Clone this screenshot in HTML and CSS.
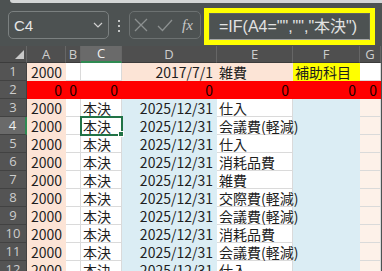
FILE: index.html
```html
<!DOCTYPE html>
<html lang="ja">
<head>
  <meta charset="UTF-8" />
  <meta name="viewport" content="width=device-width, initial-scale=1.0"/>
  <title>Sheet1</title>
  <link rel="stylesheet" href="styles.css">
</head>
<body>
  <div class="ribbon-edge"></div>
  <div class="formula-row">
    <div class="name-box">
      <span>C4</span>
      <svg width="10" height="6" viewBox="0 0 10 6"><polyline points="1,1 5,5 9,1" fill="none" stroke="#d0d0d0" stroke-width="1.2"/></svg>
    </div>
    <div class="grip"><i></i><i></i><i></i></div>
    <div class="fx-box">
      <svg width="14" height="14" viewBox="0 0 14 14"><path d="M1 1L13 13M13 1L1 13" stroke="#8c9090" stroke-width="1.3"/></svg>
      <svg width="16" height="13" viewBox="0 0 16 13"><polyline points="1,7 5.5,11.5 15,1" fill="none" stroke="#8c9090" stroke-width="1.3"/></svg>
      <span class="fx">fx</span>
    </div>
    <div class="formula-mark">
      <div class="formula">=IF(A4="","","本決")</div>
    </div>
  </div>

  <table class="sheet">
    <colgroup>
      <col style="width:27px"><col style="width:39px"><col style="width:15px"><col style="width:41px">
      <col style="width:95px"><col style="width:76px"><col style="width:67px"><col style="width:21px">
    </colgroup>
    <tr class="head">
      <th class="corner"><svg width="9" height="9" viewBox="0 0 9 9"><polygon points="9,0 9,9 0,9" fill="#c8c8c8"/></svg></th>
      <th>A</th><th>B</th><th class="sel">C</th><th>D</th><th>E</th><th>F</th><th>G</th>
    </tr>
    <tr>
      <th>1</th><td class="peach num">2000</td><td></td><td></td><td class="peach num">2017/7/1</td>
      <td class="peach">雑費</td><td class="yellow">補助科目</td><td></td>
    </tr>
    <tr class="red">
      <th>2</th><td class="num">0</td><td class="num">0</td><td class="num">0</td><td class="num">0</td>
      <td class="num">0</td><td class="num">0</td><td class="num">0</td>
    </tr>
    <tr>
      <th>3</th><td class="peach num">2000</td><td></td><td>本決</td><td class="blue num">2025/12/31</td>
      <td>仕入</td><td class="blue"></td><td class="pale"></td>
    </tr>
    <tr>
      <th class="sel">4</th><td class="peach num">2000</td><td></td><td class="active">本決</td><td class="blue num">2025/12/31</td>
      <td>会議費(軽減)</td><td class="blue"></td><td class="pale"></td>
    </tr>
    <tr>
      <th>5</th><td class="peach num">2000</td><td></td><td>本決</td><td class="blue num">2025/12/31</td>
      <td>仕入</td><td class="blue"></td><td class="pale"></td>
    </tr>
    <tr>
      <th>6</th><td class="peach num">2000</td><td></td><td>本決</td><td class="blue num">2025/12/31</td>
      <td>消耗品費</td><td class="blue"></td><td class="pale"></td>
    </tr>
    <tr>
      <th>7</th><td class="peach num">2000</td><td></td><td>本決</td><td class="blue num">2025/12/31</td>
      <td>雑費</td><td class="blue"></td><td class="pale"></td>
    </tr>
    <tr>
      <th>8</th><td class="peach num">2000</td><td></td><td>本決</td><td class="blue num">2025/12/31</td>
      <td>交際費(軽減)</td><td class="blue"></td><td class="pale"></td>
    </tr>
    <tr>
      <th>9</th><td class="peach num">2000</td><td></td><td>本決</td><td class="blue num">2025/12/31</td>
      <td>会議費(軽減)</td><td class="blue"></td><td class="pale"></td>
    </tr>
    <tr>
      <th>10</th><td class="peach num">2000</td><td></td><td>本決</td><td class="blue num">2025/12/31</td>
      <td>消耗品費</td><td class="blue"></td><td class="pale"></td>
    </tr>
    <tr>
      <th>11</th><td class="peach num">2000</td><td></td><td>本決</td><td class="blue num">2025/12/31</td>
      <td>会議費(軽減)</td><td class="blue"></td><td class="pale"></td>
    </tr>
    <tr>
      <th>12</th><td class="peach num">2000</td><td></td><td>本決</td><td class="blue num">2025/12/31</td>
      <td>仕入</td><td class="blue"></td><td class="pale"></td>
    </tr>
  </table>
</body>
</html>
```

FILE: styles.css
```css
body {
  margin: 0;
  width: 382px;
  height: 271px;
  overflow: hidden;
  background: #4d5252;
  font-family: "Noto Sans CJK JP", sans-serif;
}
.ribbon-edge {
  height: 3px;
  margin-left: 10px;
  background: #d4d6d6;
  border-bottom-left-radius: 4px;
}
.formula-row {
  display: flex;
  align-items: flex-start;
  height: 43px;
  padding-left: 8px;
}
.name-box {
  width: 101px;
  height: 28px;
  margin-top: 8px;
  box-sizing: border-box;
  border: 1px solid #7b8080;
  border-radius: 5px;
  display: flex;
  align-items: center;
  justify-content: space-between;
  padding: 0 5px 0 5px;
  color: #e6e6e6;
  font: 15px "Liberation Sans", sans-serif;
}
.grip {
  display: flex;
  flex-direction: column;
  gap: 3px;
  margin: 17px 0 0 9px;
}
.grip i {
  width: 2px;
  height: 2px;
  background: #c4c6c6;
}
.fx-box {
  width: 72px;
  height: 28px;
  margin: 8px 0 0 9px;
  box-sizing: border-box;
  border: 1px solid #6c7171;
  border-radius: 5px;
  display: flex;
  align-items: center;
  gap: 9px;
  padding-left: 4px;
}
.fx {
  font: italic 15px "Liberation Serif", serif;
  color: #c8c8c8;
}
.formula-mark {
  width: 171px;
  height: 37px;
  margin: 5px 0 0 3px;
  box-sizing: border-box;
  border: 5px solid #ffff00;
}
.formula {
  height: 100%;
  box-sizing: border-box;
  border: 1px solid #5e6363;
  border-bottom-color: #a6a8a8;
  padding-left: 9px;
  color: #e2e2e2;
  font: 16px/25px "Liberation Sans", "Noto Sans CJK JP", sans-serif;
  white-space: nowrap;
}

.sheet {
  border-collapse: separate;
  border-spacing: 0;
  table-layout: fixed;
  width: 381px;
  background: #fff;
  font-size: 14px;
  color: #1e1e1e;
}
.sheet tr {
  height: 18px;
}
.sheet tr.head {
  height: 16px;
}
.sheet td {
  padding: 0 3px 0 2px;
  border-right: 1px solid #dadada;
  border-bottom: 1px solid #dadada;
  white-space: nowrap;
  line-height: 16px;
}
.sheet th {
  padding: 0;
  background: #545454;
  color: #cdcdcd;
  font: 13px/15px "Open Sans", sans-serif;
  text-align: center;
  border-right: 1px solid #424242;
  border-bottom: 1px solid #424242;
}
.sheet .head th {
  background: #4f4f4f;
  border-right-color: #666;
  border-bottom: 1px solid #3c3c3c;
}
.sheet .head th.corner {
  text-align: right;
  vertical-align: bottom;
  line-height: 0;
  padding: 0 2px 3px 0;
}
.sheet th.sel {
  background: #6a6a6a;
  color: #f0f0f0;
  border-right: 2px solid #2f8a52;
}
.sheet .head th.sel {
  border-right: 1px solid #666;
  border-bottom: 2px solid #2f8a52;
}
.num {
  text-align: right;
}
.sheet .peach {
  background: #fce4d6;
  border-color: #fce4d6;
}
.sheet .blue {
  background: #dbedf4;
  border-color: #dbedf4;
}
.sheet .yellow {
  background: #ffff00;
  border-color: #ffff00;
}
.sheet .pale {
  background: #fdf1e9;
}
.sheet .red td {
  background: #ff0000;
  border-color: #ff0000;
  color: #1a0000;
}
.sheet td.active {
  position: relative;
  outline: 2px solid #217346;
  outline-offset: -1px;
}
.sheet td.active::after {
  content: "";
  position: absolute;
  right: -3px;
  bottom: -3px;
  width: 4px;
  height: 4px;
  background: #217346;
  border: 1px solid #fff;
}
```
